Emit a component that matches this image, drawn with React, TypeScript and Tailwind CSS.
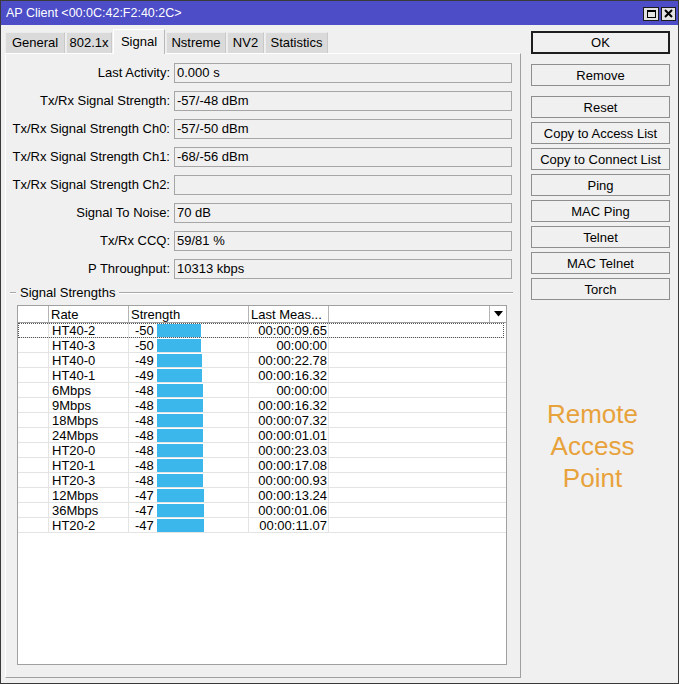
import React from "react";

const tabs = [
  { name: "General", width: "w-[60px]" },
  { name: "802.1x", width: "w-[46px]" },
  { name: "Signal", width: "w-[52px]", active: true },
  { name: "Nstreme", width: "w-[60px]" },
  { name: "NV2", width: "w-[37px]" },
  { name: "Statistics", width: "w-[63px]" },
];

const fields = [
  { label: "Last Activity:", value: "0.000 s" },
  { label: "Tx/Rx Signal Strength:", value: "-57/-48 dBm" },
  { label: "Tx/Rx Signal Strength Ch0:", value: "-57/-50 dBm" },
  { label: "Tx/Rx Signal Strength Ch1:", value: "-68/-56 dBm" },
  { label: "Tx/Rx Signal Strength Ch2:", value: "" },
  { label: "Signal To Noise:", value: "70 dB" },
  { label: "Tx/Rx CCQ:", value: "59/81 %" },
  { label: "P Throughput:", value: "10313 kbps" },
];

const rows = [
  { rate: "HT40-2", strength: -50, last: "00:00:09.65" },
  { rate: "HT40-3", strength: -50, last: "00:00:00" },
  { rate: "HT40-0", strength: -49, last: "00:00:22.78" },
  { rate: "HT40-1", strength: -49, last: "00:00:16.32" },
  { rate: "6Mbps", strength: -48, last: "00:00:00" },
  { rate: "9Mbps", strength: -48, last: "00:00:16.32" },
  { rate: "18Mbps", strength: -48, last: "00:00:07.32" },
  { rate: "24Mbps", strength: -48, last: "00:00:01.01" },
  { rate: "HT20-0", strength: -48, last: "00:00:23.03" },
  { rate: "HT20-1", strength: -48, last: "00:00:17.08" },
  { rate: "HT20-3", strength: -48, last: "00:00:00.93" },
  { rate: "12Mbps", strength: -47, last: "00:00:13.24" },
  { rate: "36Mbps", strength: -47, last: "00:00:01.06" },
  { rate: "HT20-2", strength: -47, last: "00:00:11.07" },
];

const actions = [
  "Copy to Access List",
  "Copy to Connect List",
  "Ping",
  "MAC Ping",
  "Telnet",
  "MAC Telnet",
  "Torch",
];

const Button = ({ children, className = "" }: { children: React.ReactNode; className?: string }) => (
  <button
    className={`h-[22px] w-full border border-[#8e8e8e] bg-[#f0f0f0] text-[13px] leading-none text-black ${className}`}
  >
    {children}
  </button>
);

const App = () => {
  return (
    <div className="w-[679px] h-[684px] border border-[#3a3a3a] bg-[#f0f0f0] flex flex-col font-['Liberation_Sans',Arial,sans-serif] text-black overflow-hidden">
      {/* title bar */}
      <div className="h-[24px] bg-[#4c4dc7] flex items-center pl-[5px] pr-[2px] text-white text-[12.5px]">
        <span className="flex-1 pt-[1px]">AP Client &lt;00:0C:42:F2:40:2C&gt;</span>
        <div className="flex gap-[2px] pt-[1px]">
          <div className="w-[16px] h-[14px] border border-[#1c1c1c] bg-[#e2e2e2] flex items-center justify-center">
            <div className="w-[9px] h-[8px] border border-black border-t-2" />
          </div>
          <div className="w-[15px] h-[14px] border border-[#1c1c1c] bg-[#e2e2e2] flex items-center justify-center">
            <svg width="9" height="9" viewBox="0 0 9 9">
              <path d="M1 1 L8 8 M8 1 L1 8" stroke="#000" strokeWidth="2" />
            </svg>
          </div>
        </div>
      </div>

      <div className="flex flex-1 min-h-0">
        {/* left: tabs + panel */}
        <div className="w-[516px] ml-[4px] flex flex-col mb-[5px]">
          <div className="h-[28px] flex items-end gap-px">
            {tabs.map((t) =>
              t.active ? (
                <div
                  key={t.name}
                  className={`${t.width} h-[25px] -mb-px relative z-10 bg-[#f0f0f0] border-t border-l border-white border-r border-r-[#b8b8b8] flex items-center justify-center text-[13px]`}
                >
                  {t.name}
                </div>
              ) : (
                <div
                  key={t.name}
                  className={`${t.width} h-[21px] bg-[#dadada] border border-b-0 border-[#c9c9c9] border-t-[#ececec] border-l-[#ececec] flex items-center justify-center text-[13px]`}
                >
                  {t.name}
                </div>
              )
            )}
          </div>

          <div className="flex-1 flex flex-col border-t border-l border-white border-r border-b border-r-[#a0a0a0] border-b-[#a0a0a0] pt-[9px]">
            <div className="flex flex-col gap-[8px]">
              {fields.map((f) => (
                <div key={f.label} className="flex items-center h-[20px]">
                  <div className="w-[165px] text-right text-[13px] pr-[1px] whitespace-nowrap">{f.label}</div>
                  <div className="ml-[3px] w-[338px] h-[20px] border border-[#a6a6a6] bg-[#f0f0f0] pl-[2px] flex items-center text-[13px]">
                    {f.value}
                  </div>
                </div>
              ))}
            </div>

            {/* group header */}
            <div className="flex items-center mt-[6px] h-[16px] ml-[4px] mr-[7px]">
              <div className="w-[6px] border-t border-b border-t-[#a8a8a8] border-b-white" />
              <span className="px-[4px] text-[13px]">Signal Strengths</span>
              <div className="flex-1 border-t border-b border-t-[#a8a8a8] border-b-white" />
            </div>

            {/* table */}
            <div className="ml-[11px] mt-[4px] w-[490px] h-[360px] border border-[#a0a0a0] bg-white flex flex-col">
              <div className="h-[17px] flex border-b border-[#a0a0a0] text-[13px] leading-[17px]">
                <div className="w-[31px] border-r border-[#b4b4b4]" />
                <div className="w-[80px] border-r border-[#b4b4b4] pl-[2px]">Rate</div>
                <div className="w-[120px] border-r border-[#b4b4b4] pl-[2px]">Strength</div>
                <div className="w-[80px] border-r border-[#b4b4b4] pl-[2px] whitespace-nowrap">Last Meas...</div>
                <div className="flex-1 border-r border-[#b4b4b4]" />
                <div className="w-[16px] flex items-center justify-center">
                  <svg width="9" height="6" viewBox="0 0 9 6">
                    <path d="M0 0 H9 L4.5 5.5 Z" fill="#000" />
                  </svg>
                </div>
              </div>
              {rows.map((r, i) => (
                <div
                  key={r.rate}
                  className={`h-[15px] flex border-b border-[#e4e4e4] text-[13px] leading-[15px] ${
                    i === 0 ? "outline-1 outline-dotted outline-[#555] -outline-offset-1 mr-[2px]" : ""
                  }`}
                >
                  <div className="w-[31px] border-r border-[#e4e4e4]" />
                  <div className="w-[80px] border-r border-[#e4e4e4] pl-[3px]">{r.rate}</div>
                  <div className="w-[120px] border-r border-[#e4e4e4] pl-[6px] flex items-center">
                    <span className="w-[22px]">{r.strength}</span>
                    <span className="h-[13px] bg-[#3cb7ec]" style={{ width: 94 + r.strength }} />
                  </div>
                  <div className="w-[80px] border-r border-[#e4e4e4] text-right pr-[1px]">{r.last}</div>
                  <div className="flex-1" />
                </div>
              ))}
            </div>
          </div>
        </div>

        {/* right: buttons */}
        <div className="ml-[10px] w-[139px] pt-[6px] flex flex-col">
          <button className="h-[23px] w-full border-2 border-[#1e1e1e] bg-[#f0f0f0] text-[13px] leading-none">OK</button>
          <Button className="mt-[10px]">Remove</Button>
          <Button className="mt-[10px]">Reset</Button>
          <div className="mt-[4px] flex flex-col gap-[4px]">
            {actions.map((a) => (
              <Button key={a}>{a}</Button>
            ))}
          </div>
          <div className="mt-[98px] pr-[16px] text-center text-[26px] leading-[32px] text-[#e8a23c]">
            Remote
            <br />
            Access
            <br />
            Point
          </div>
        </div>
      </div>
    </div>
  );
};

export default App;
